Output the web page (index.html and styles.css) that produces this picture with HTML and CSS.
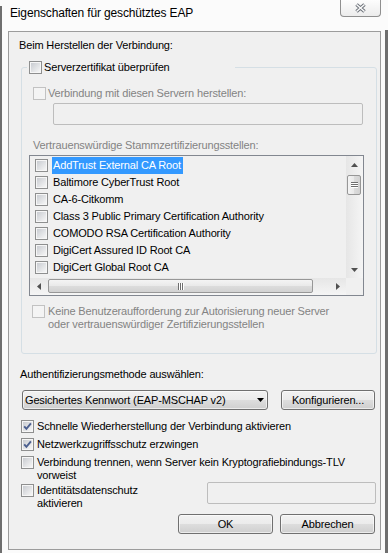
FILE: index.html
```html
<!DOCTYPE html>
<html lang="de">
<head>
<meta charset="utf-8">
<title>Eigenschaften für geschütztes EAP</title>
<link rel="stylesheet" href="styles.css">
</head>
<body>
<div class="window">
  <header class="titlebar">
    <h1 class="title">Eigenschaften für geschütztes EAP</h1>
    <div class="close" role="button" aria-label="Schließen">
      <svg width="13" height="10" viewBox="0 0 13 10"><path d="M2.5 1.5 L10.5 8.5 M10.5 1.5 L2.5 8.5" stroke="#6f747c" stroke-width="3.6" fill="none"/><path d="M2.5 1.5 L10.5 8.5 M10.5 1.5 L2.5 8.5" stroke="#fbfbfb" stroke-width="1.5" fill="none"/></svg>
    </div>
  </header>
  <main class="panel">
    <p class="heading">Beim Herstellen der Verbindung:</p>
    <fieldset class="group">
      <legend class="legend"><span class="cb"><span class="box"></span><span class="cb-text">Serverzertifikat überprüfen</span></span></legend>
      <div class="group-body">
        <div class="cb disabled row-servers"><span class="box"></span><span class="cb-text">Verbindung mit diesen Servern herstellen:</span></div>
        <div class="textbox servers-input"></div>
        <div class="gray-label">Vertrauenswürdige Stammzertifizierungsstellen:</div>
        <div class="listbox">
          <ul class="items">
            <li class="item"><span class="box"></span><span class="item-text selected">AddTrust External CA Root</span></li>
            <li class="item"><span class="box"></span><span class="item-text">Baltimore CyberTrust Root</span></li>
            <li class="item"><span class="box"></span><span class="item-text">CA-6-Citkomm</span></li>
            <li class="item"><span class="box"></span><span class="item-text">Class 3 Public Primary Certification Authority</span></li>
            <li class="item"><span class="box"></span><span class="item-text">COMODO RSA Certification Authority</span></li>
            <li class="item"><span class="box"></span><span class="item-text">DigiCert Assured ID Root CA</span></li>
            <li class="item"><span class="box"></span><span class="item-text">DigiCert Global Root CA</span></li>
          </ul>
          <div class="vscroll">
            <div class="arrow"><svg width="7" height="4" viewBox="0 0 7 4"><path d="M0 4 L3.5 0 L7 4 Z" fill="#505050"/></svg></div>
            <div class="vtrack"><div class="vthumb"><svg width="7" height="6" viewBox="0 0 7 6"><rect x="0" y="0" width="7" height="1" fill="#6e6e6e"/><rect x="0" y="2" width="7" height="1" fill="#6e6e6e"/><rect x="0" y="4" width="7" height="1" fill="#6e6e6e"/><rect x="0" y="1" width="7" height="1" fill="#ffffff"/><rect x="0" y="3" width="7" height="1" fill="#ffffff"/><rect x="0" y="5" width="7" height="1" fill="#ffffff"/></svg></div></div>
            <div class="arrow"><svg width="7" height="4" viewBox="0 0 7 4"><path d="M0 0 L7 0 L3.5 4 Z" fill="#505050"/></svg></div>
          </div>
          <div class="hscroll">
            <div class="arrow"><svg width="4" height="7" viewBox="0 0 4 7"><path d="M4 0 L4 7 L0 3.5 Z" fill="#505050"/></svg></div>
            <div class="htrack"><div class="hthumb"><svg width="6" height="7" viewBox="0 0 6 7"><rect x="0" y="0" width="1" height="7" fill="#6e6e6e"/><rect x="2" y="0" width="1" height="7" fill="#6e6e6e"/><rect x="4" y="0" width="1" height="7" fill="#6e6e6e"/><rect x="1" y="0" width="1" height="7" fill="#ffffff"/><rect x="3" y="0" width="1" height="7" fill="#ffffff"/><rect x="5" y="0" width="1" height="7" fill="#ffffff"/></svg></div></div>
            <div class="arrow"><svg width="4" height="7" viewBox="0 0 4 7"><path d="M0 0 L4 3.5 L0 7 Z" fill="#505050"/></svg></div>
          </div>
          <div class="corner"></div>
        </div>
        <div class="cb disabled row-prompt"><span class="box"></span><span class="cb-text">Keine Benutzeraufforderung zur Autorisierung neuer Server<br>oder vertrauenswürdiger Zertifizierungsstellen</span></div>
      </div>
    </fieldset>

    <p class="auth-label">Authentifizierungsmethode auswählen:</p>
    <div class="method-row">
      <div class="combo"><span>Gesichertes Kennwort (EAP-MSCHAP v2)</span><svg width="7" height="4" viewBox="0 0 7 4"><path d="M0 0 L7 0 L3.5 4 Z" fill="#000"/></svg></div>
      <div class="btn btn-config">Konfigurieren...</div>
    </div>

    <div class="cb opt opt-1"><span class="box"><svg width="11" height="11" viewBox="0 0 11 11"><path d="M2.2 5.4 L4.4 7.9 L8.9 2.4" stroke="#4b5f8f" stroke-width="1.9" fill="none"/></svg></span><span class="cb-text">Schnelle Wiederherstellung der Verbindung aktivieren</span></div>
    <div class="cb opt opt-2"><span class="box"><svg width="11" height="11" viewBox="0 0 11 11"><path d="M2.2 5.4 L4.4 7.9 L8.9 2.4" stroke="#4b5f8f" stroke-width="1.9" fill="none"/></svg></span><span class="cb-text">Netzwerkzugriffsschutz erzwingen</span></div>
    <div class="cb opt opt-3"><span class="box"></span><span class="cb-text">Verbindung trennen, wenn Server kein Kryptografiebindungs-TLV<br>vorweist</span></div>
    <div class="identity-row">
      <div class="cb opt"><span class="box"></span><span class="cb-text">Identitätsdatenschutz<br>aktivieren</span></div>
      <div class="textbox identity-input"></div>
    </div>

    <div class="actions">
      <div class="btn btn-action">OK</div>
      <div class="btn btn-action">Abbrechen</div>
    </div>
  </main>
</div>
</body>
</html>
```

FILE: styles.css
```css
* { box-sizing: border-box; }
html, body { margin: 0; padding: 0; }
body {
  width: 388px;
  height: 553px;
  overflow: hidden;
  font-family: "Liberation Sans", Arial, sans-serif;
  font-size: 11px;
  line-height: 13px;
  letter-spacing: -0.15px;
  color: #000;
  background: #fbfbfb;
}
.window {
  height: 553px;
  display: flex;
  flex-direction: column;
  background:
    linear-gradient(#6f6f6f, #6f6f6f) left 0 top 6px / 2px calc(100% - 6px) no-repeat,
    linear-gradient(#6f6f6f, #6f6f6f) right 0 top 30px / 3px calc(100% - 30px) no-repeat,
    #fbfbfb;
}
.titlebar {
  height: 31px;
  flex: none;
  display: flex;
  align-items: flex-start;
  justify-content: space-between;
  padding: 0 7px 0 10px;
}
.title {
  margin: 0;
  padding-top: 6px;
  font-size: 12px;
  line-height: 14px;
  font-weight: normal;
  letter-spacing: -0.15px;
}
.close {
  width: 41px;
  height: 17px;
  border: 1px solid #8f8f8f;
  border-top: none;
  border-radius: 0 0 4px 4px;
  background: linear-gradient(#fdfdfd, #ececec);
  display: flex;
  align-items: center;
  justify-content: center;
}
.panel {
  margin-left: 8px;
  width: 373px;
  height: 519px;
  flex: none;
  border: 1px solid #9c9c9c;
  background: #f0f0f0;
  overflow: hidden;
}
.heading {
  margin: 7px 0 0 10px;
}
.group {
  margin: 9px 3px 0 12px;
  padding: 0;
  min-width: 0;
  border: 1px solid #d5dfe5;
  border-radius: 3px;
}
.legend {
  margin-left: 5px;
  padding: 0 0 0 2px;
  width: 208px;
  height: 13px;
  line-height: 13px;
}
.group-body {
  padding: 0 0 22px 11px;
}
.cb {
  display: flex;
  align-items: flex-start;
  white-space: nowrap;
}
.box {
  flex: none;
  display: inline-flex;
  width: 13px;
  height: 13px;
  margin-right: 3px;
  border: 1px solid #8e8f8f;
  background:
    linear-gradient(135deg, #c9ccd1, #f6f6f6) 1px 1px / 9px 9px no-repeat,
    #f6f6f6;
}
.legend .box { margin-right: 2px; }
.disabled { color: #838383; }
.disabled .box {
  border-color: #c2c2c2;
  background: #f4f4f4;
}
.row-servers { margin-top: 13px; }
.row-servers .box { margin-right: 2px; }
.textbox {
  height: 22px;
  border: 1px solid #bdbdbd;
  border-radius: 2px;
  background: #f0f0f0;
}
.servers-input {
  margin: 3px 0 0 20px;
  width: 310px;
}
.gray-label {
  margin-top: 14px;
  color: #838383;
}
.listbox {
  margin: 3px 0 0 -4px;
  width: 335px;
  height: 141px;
  border: 1px solid #828790;
  background: #f0f0f0;
  display: grid;
  grid-template-columns: 1fr 17px;
  grid-template-rows: 1fr 17px;
  overflow: hidden;
}
.items {
  margin: 0;
  padding: 1px 0 0 5px;
  list-style: none;
  overflow: hidden;
  min-width: 0;
  min-height: 0;
}
.item {
  display: flex;
  align-items: center;
  height: 17px;
  white-space: nowrap;
}
.item .box { margin-right: 4px; }
.item-text {
  height: 17px;
  line-height: 17px;
  padding: 0 2px 0 1px;
}
.selected {
  background: #3399ff;
  color: #fff;
}
.arrow {
  width: 17px;
  height: 17px;
  flex: none;
  display: flex;
  align-items: center;
  justify-content: center;
}
.vscroll {
  display: flex;
  flex-direction: column;
  background: linear-gradient(to right, #e6e6e6, #f5f5f5);
  min-height: 0;
}
.vtrack {
  flex: 1;
  padding: 2px 2px 0 1px;
}
.vthumb {
  height: 20px;
  border: 1px solid #979797;
  border-radius: 2px;
  background: linear-gradient(to right, #f4f4f4, #e9e9e9 50%, #dcdcdc 51%, #d2d2d2);
  display: flex;
  align-items: center;
  justify-content: center;
}
.hscroll {
  display: flex;
  background: linear-gradient(#e6e6e6, #f5f5f5);
  min-width: 0;
}
.htrack {
  flex: 1;
  padding: 1px 0 0 1px;
}
.hthumb {
  width: 265px;
  height: 14px;
  border: 1px solid #979797;
  border-radius: 2px;
  background: linear-gradient(#f4f4f4, #e9e9e9 50%, #dcdcdc 51%, #d2d2d2);
  display: flex;
  align-items: center;
  justify-content: center;
}
.corner { background: #f0f0f0; }
.row-prompt { margin: 9px 0 0 -1px; }
.auth-label {
  margin: 14px 0 0 11px;
}
.method-row {
  display: flex;
  margin: 9px 0 0 13px;
}
.combo {
  width: 246px;
  height: 20px;
  border: 1px solid #707070;
  border-radius: 3px;
  background: linear-gradient(#f2f2f2, #ebebeb 50%, #dddddd 51%, #cfcfcf);
  box-shadow: inset 0 0 0 1px rgba(255,255,255,0.6);
  display: flex;
  align-items: center;
  justify-content: space-between;
  padding: 0 3px 0 2px;
  white-space: nowrap;
}
.btn {
  height: 20px;
  border: 1px solid #707070;
  border-radius: 3px;
  background: linear-gradient(#f2f2f2, #ebebeb 50%, #dddddd 51%, #cfcfcf);
  box-shadow: inset 0 0 0 1px rgba(255,255,255,0.6);
  display: flex;
  align-items: center;
  justify-content: center;
  white-space: nowrap;
}
.btn-config {
  margin-left: 13px;
  width: 94px;
}
.opt { margin-left: 12px; }
.opt-1 { margin-top: 10px; }
.opt-2 { margin-top: 5px; }
.opt-3 { margin-top: 5px; }
.opt .box { margin-right: 3px; }
.identity-row {
  display: flex;
  align-items: flex-start;
  justify-content: space-between;
  padding-right: 4px;
}
.identity-row .cb { margin-top: 2px; }
.identity-input {
  width: 169px;
}
.actions {
  display: flex;
  justify-content: flex-end;
  gap: 7px;
  margin-top: 4px;
  padding-right: 5px;
}
.btn-action { width: 95px; }
```
